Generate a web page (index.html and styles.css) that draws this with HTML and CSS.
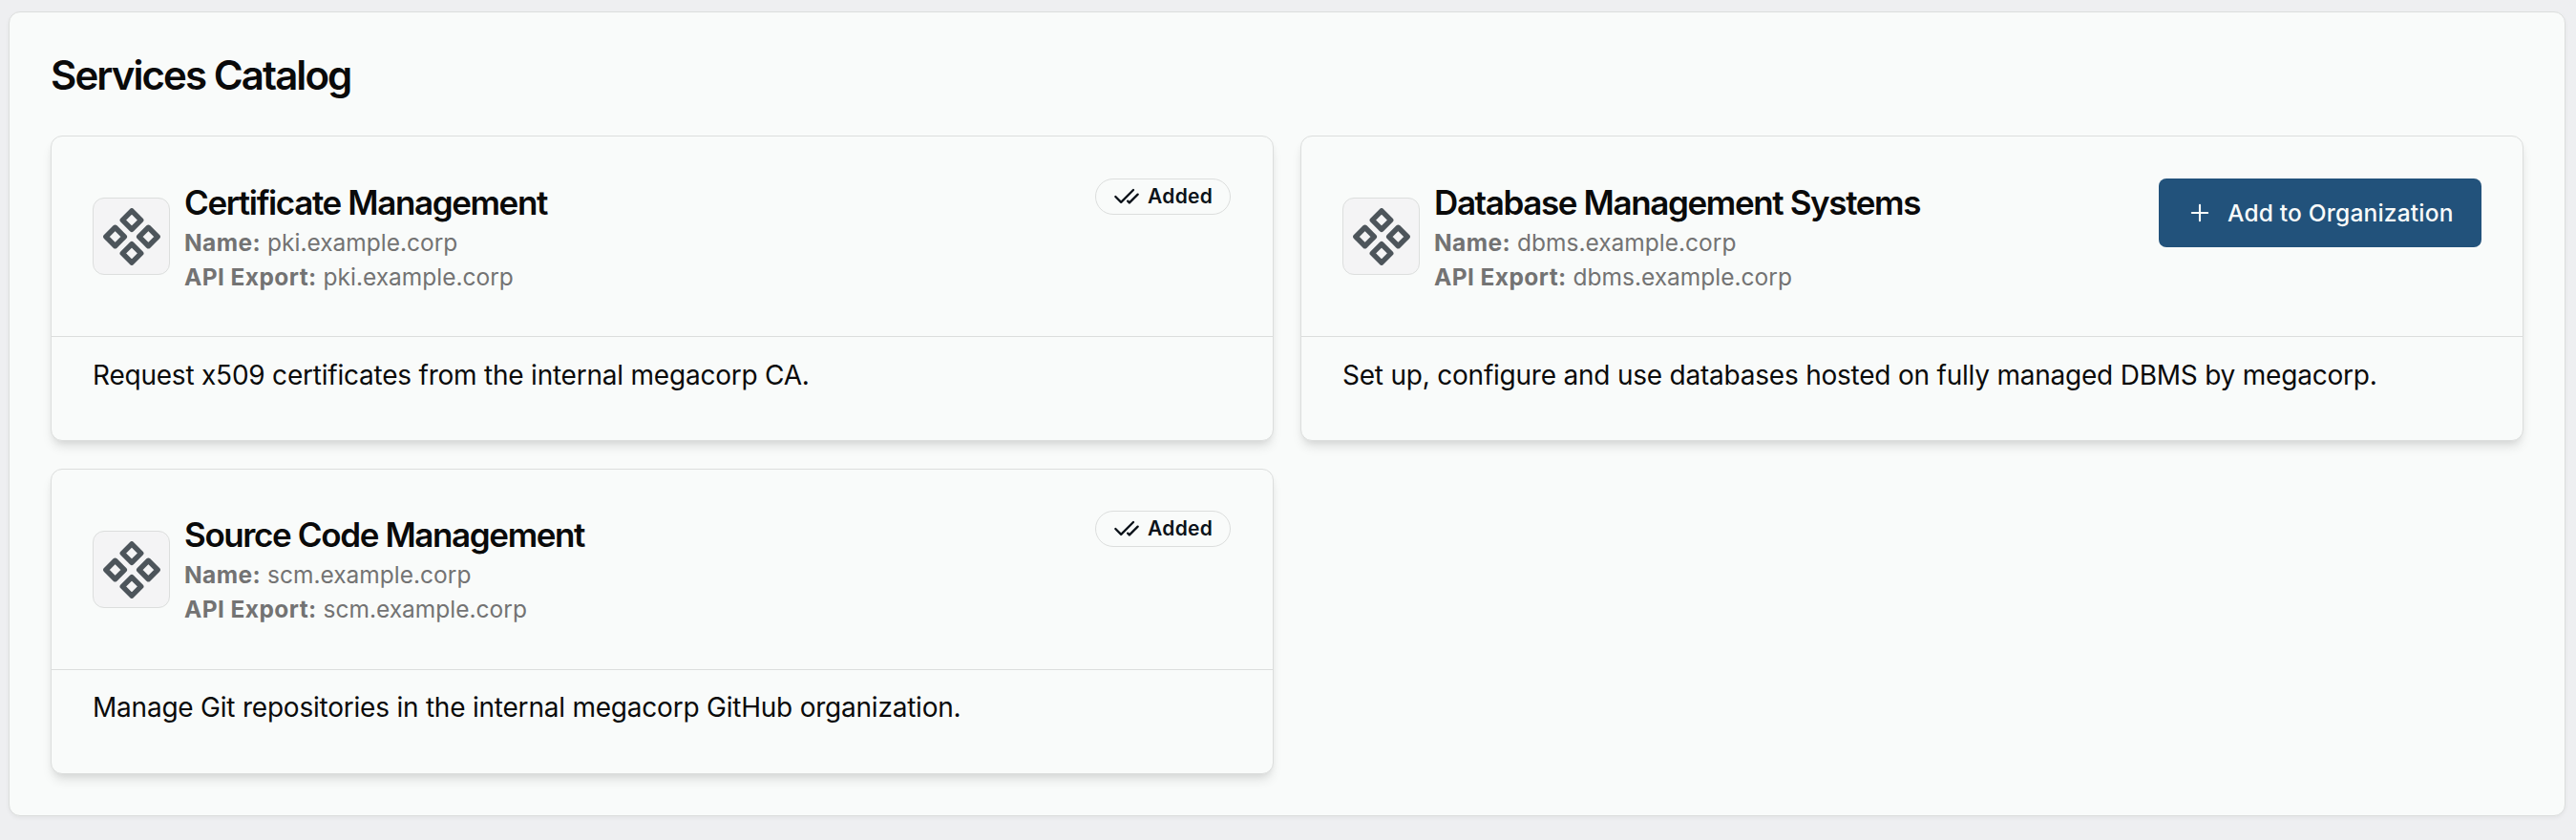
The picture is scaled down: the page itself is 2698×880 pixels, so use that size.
FILE: index.html
```html
<!DOCTYPE html>
<html lang="en">
<head>
<meta charset="utf-8">
<title>Services Catalog</title>
<link rel="stylesheet" href="styles.css">
</head>
<body>
<svg class="defs" aria-hidden="true">
  <symbol id="component" viewBox="0 0 60 60">
    <path d="M30 2.9l9.7 9.7-9.7 9.7-9.7-9.7zM12.6 20.3l9.7 9.7-9.7 9.7L2.9 30zM47.4 20.3l9.7 9.7-9.7 9.7-9.7-9.7zM30 37.7l9.7 9.7-9.7 9.7-9.7-9.7z" fill="none" stroke="currentColor" stroke-width="5.5" stroke-linejoin="round"/>
  </symbol>
  <symbol id="check-check" viewBox="0 0 24 24">
    <path d="M18 6 7 17l-5-5M22 10l-7.5 7.5L13 16" fill="none" stroke="currentColor" stroke-width="2" stroke-linecap="round" stroke-linejoin="round"/>
  </symbol>
</svg>
<main class="panel">
  <h1 class="panel-title">Services Catalog</h1>
  <div class="grid">
    <section class="card">
      <header class="card-header">
        <div class="logo"><svg><use href="#component"/></svg></div>
        <div class="info">
          <h2 class="name">Certificate Management</h2>
          <p class="meta"><b>Name:</b> pki.example.corp</p>
          <p class="meta"><b>API Export:</b> pki.example.corp</p>
        </div>
        <span class="badge"><svg><use href="#check-check"/></svg><span>Added</span></span>
      </header>
      <p class="description">Request x509 certificates from the internal megacorp CA.</p>
    </section>
    <section class="card">
      <header class="card-header">
        <div class="logo"><svg><use href="#component"/></svg></div>
        <div class="info">
          <h2 class="name">Database Management Systems</h2>
          <p class="meta"><b>Name:</b> dbms.example.corp</p>
          <p class="meta"><b>API Export:</b> dbms.example.corp</p>
        </div>
        <button class="button" type="button"><svg viewBox="0 0 24 24"><path d="M5 12h14M12 5v14" fill="none" stroke="currentColor" stroke-width="1.8" stroke-linecap="round"/></svg><span>Add to Organization</span></button>
      </header>
      <p class="description">Set up, configure and use databases hosted on fully managed DBMS by megacorp.</p>
    </section>
    <section class="card">
      <header class="card-header compact">
        <div class="logo"><svg><use href="#component"/></svg></div>
        <div class="info">
          <h2 class="name">Source Code Management</h2>
          <p class="meta"><b>Name:</b> scm.example.corp</p>
          <p class="meta"><b>API Export:</b> scm.example.corp</p>
        </div>
        <span class="badge"><svg><use href="#check-check"/></svg><span>Added</span></span>
      </header>
      <p class="description">Manage Git repositories in the internal megacorp GitHub organization.</p>
    </section>
  </div>
</main>
</body>
</html>
```
FILE: styles.css
```css
* { box-sizing: border-box; margin: 0; padding: 0; }
body {
  padding: 12px 11px 25px 9px;
  background: #eeeff1;
  color: #0a0a0a;
  font-family: Inter, "Liberation Sans", sans-serif;
  font-size: 28px;
}
.defs { display: none; }
.panel {
  height: 843px;
  padding: 45px 43px 43px;
  border: 1px solid #dcdedd;
  border-radius: 12px;
  background: #f9fbfa;
  box-shadow: 0 2px 4px rgba(0, 0, 0, .05);
}
.panel-title {
  height: 84px;
  font-size: 42px;
  line-height: 42px;
  font-weight: 600;
  letter-spacing: -1.92px;
}
.grid { display: grid; grid-template-columns: 1fr 1fr; gap: 29px 28px; }
.card {
  height: 320px;
  border: 1px solid #dcdedd;
  border-radius: 12px;
  background: #f9fbfa;
  box-shadow: 0 8px 12px -2px rgba(0, 0, 0, .1), 0 4px 8px -4px rgba(0, 0, 0, .1);
}
.card-header {
  display: flex;
  align-items: flex-start;
  height: 210px;
  padding: 44px 44px 0 43px;
  border-bottom: 1px solid #dcdedd;
}
.compact { padding-top: 43px; }
.logo {
  display: grid;
  place-items: center;
  flex: none;
  width: 81px;
  height: 81px;
  margin: 20px 15px 0 0;
  border: 1px solid #dcdedd;
  border-radius: 12px;
  background: #f4f4f5;
  color: #4d555b;
}
.compact .logo { margin-top: 21px; }
.logo svg { width: 60px; height: 60px; }
.info { flex: 1; padding-top: 5px; }
.name {
  height: 44px;
  font-size: 35px;
  line-height: 40px;
  font-weight: 600;
  letter-spacing: -1.38px;
}
.meta { color: #737373; font-size: 24.5px; line-height: 36px; }
.meta b { font-weight: 700; letter-spacing: .42px; }
.badge {
  display: flex;
  align-items: center;
  width: 142px;
  height: 38px;
  padding-left: 18px;
  border: 1px solid #dcdedd;
  border-radius: 19px;
  color: #0b1219;
  font-size: 21px;
  font-weight: 600;
  letter-spacing: .3px;
}
.badge svg { width: 28px; height: 28px; margin-right: 8px; }
.badge span { margin-top: -1px; }
.button {
  display: flex;
  align-items: center;
  width: 338px;
  height: 72px;
  margin-right: -1px;
  padding-left: 29px;
  border: 0;
  border-radius: 8px;
  background: #22527b;
  color: #f9fbfa;
  font: 500 24.5px Inter, "Liberation Sans", sans-serif;
  letter-spacing: .2px;
  white-space: nowrap;
}
.button svg { width: 28px; height: 28px; margin-right: 15px; }
.description { padding: 20px 43px; line-height: 40px; letter-spacing: -.22px; }
.compact + .description { padding-top: 19px; }
```
